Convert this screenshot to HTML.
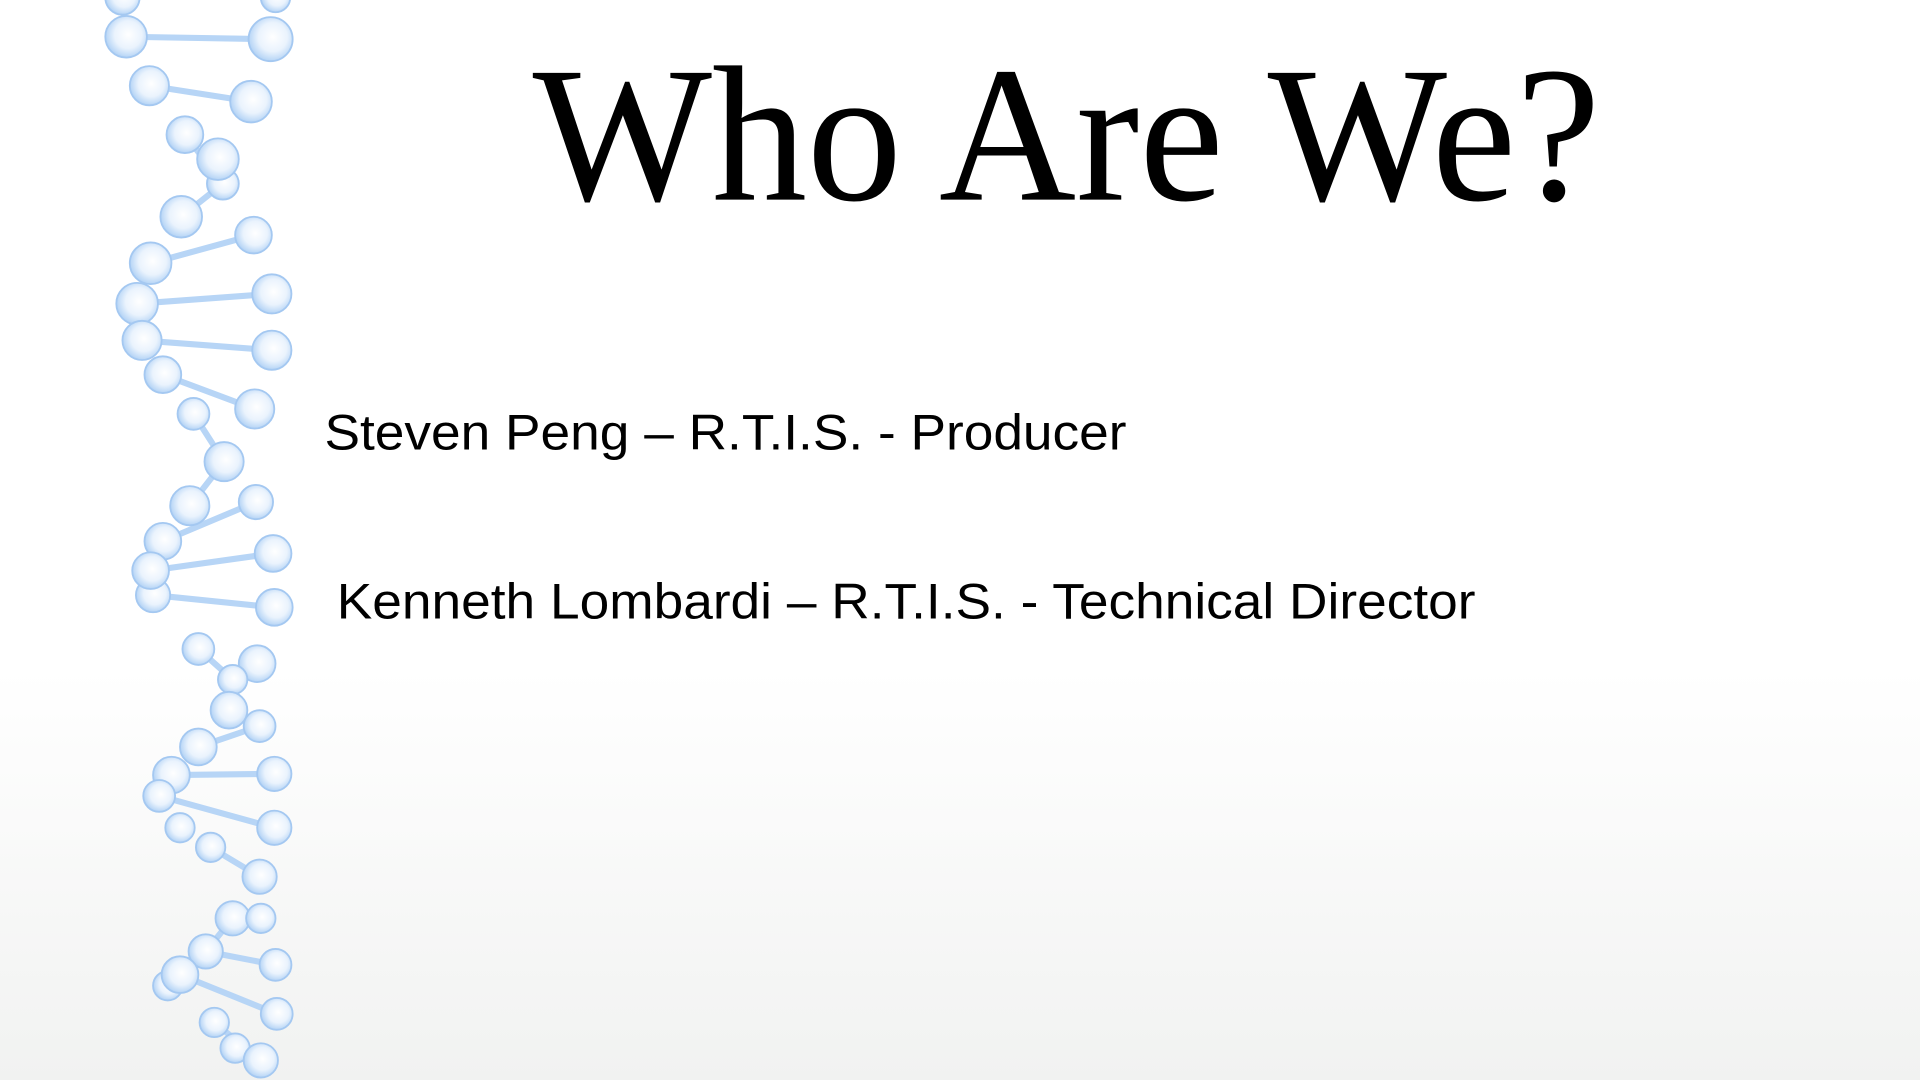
<!DOCTYPE html>
<html><head><meta charset="utf-8"><style>
html,body{margin:0;padding:0;width:1920px;height:1080px;overflow:hidden;background:#fff}
svg{display:block}
</style></head><body>
<svg width="1920" height="1080" viewBox="0 0 1568 882" xmlns="http://www.w3.org/2000/svg">
<defs>
<linearGradient id="bg" x1="0" y1="0" x2="0" y2="1">
<stop offset="0" stop-color="#ffffff"/><stop offset="0.62" stop-color="#ffffff"/><stop offset="1" stop-color="#f1f2f1"/>
</linearGradient>
<radialGradient id="ball" cx="0.55" cy="0.45" r="0.6">
<stop offset="0" stop-color="#ffffff"/><stop offset="0.55" stop-color="#eaf3fd"/><stop offset="1" stop-color="#a9cdf4"/>
</radialGradient>
</defs>
<rect width="1568" height="882" fill="url(#bg)"/>
<g stroke="#b7d5f6" stroke-width="5" stroke-linecap="round">
<line x1="103" y1="30" x2="221" y2="32"/>
<line x1="122" y1="70" x2="205" y2="83"/>
<line x1="151" y1="110" x2="182" y2="150"/>
<line x1="148" y1="177" x2="182" y2="150"/>
<line x1="123" y1="215" x2="207" y2="192"/>
<line x1="112" y1="248" x2="222" y2="240"/>
<line x1="116" y1="278" x2="222" y2="286"/>
<line x1="133" y1="306" x2="208" y2="334"/>
<line x1="158" y1="338" x2="183" y2="377"/>
<line x1="155" y1="413" x2="183" y2="377"/>
<line x1="133" y1="442" x2="209" y2="410"/>
<line x1="123" y1="466" x2="223" y2="452"/>
<line x1="125" y1="486" x2="224" y2="496"/>
<line x1="162" y1="530" x2="190" y2="555"/>
<line x1="162" y1="610" x2="212" y2="593"/>
<line x1="140" y1="633" x2="224" y2="632"/>
<line x1="130" y1="650" x2="224" y2="676"/>
<line x1="172" y1="692" x2="212" y2="716"/>
<line x1="190" y1="750" x2="168" y2="777"/>
<line x1="168" y1="777" x2="225" y2="788"/>
<line x1="147" y1="796" x2="226" y2="828"/>
<line x1="175" y1="835" x2="213" y2="866"/>
</g>
<g fill="url(#ball)" stroke="#a4c8f1" stroke-width="1.5">
<circle cx="100" cy="-2" r="14"/><circle cx="225" cy="-2" r="12"/>
<circle cx="103" cy="30" r="17"/><circle cx="221" cy="32" r="18"/>
<circle cx="122" cy="70" r="16"/><circle cx="205" cy="83" r="17"/>
<circle cx="151" cy="110" r="15"/><circle cx="182" cy="150" r="13"/><circle cx="178" cy="130" r="17"/>
<circle cx="148" cy="177" r="17"/><circle cx="207" cy="192" r="15"/>
<circle cx="123" cy="215" r="17"/>
<circle cx="112" cy="248" r="17"/><circle cx="222" cy="240" r="16"/>
<circle cx="116" cy="278" r="16"/><circle cx="222" cy="286" r="16"/>
<circle cx="133" cy="306" r="15"/><circle cx="208" cy="334" r="16"/>
<circle cx="158" cy="338" r="13"/><circle cx="183" cy="377" r="16"/>
<circle cx="155" cy="413" r="16"/><circle cx="209" cy="410" r="14"/>
<circle cx="133" cy="442" r="15"/><circle cx="223" cy="452" r="15"/>
<circle cx="125" cy="486" r="14"/>
<circle cx="123" cy="466" r="15"/><circle cx="224" cy="496" r="15"/>
<circle cx="162" cy="530" r="13"/><circle cx="210" cy="542" r="15"/>
<circle cx="190" cy="555" r="12"/><circle cx="187" cy="580" r="15"/>
<circle cx="162" cy="610" r="15"/><circle cx="212" cy="593" r="13"/>
<circle cx="140" cy="633" r="15"/><circle cx="224" cy="632" r="14"/>
<circle cx="147" cy="676" r="12"/>
<circle cx="130" cy="650" r="13"/><circle cx="224" cy="676" r="14"/>
<circle cx="172" cy="692" r="12"/><circle cx="212" cy="716" r="14"/>
<circle cx="190" cy="750" r="14"/><circle cx="213" cy="750" r="12"/>
<circle cx="168" cy="777" r="14"/><circle cx="225" cy="788" r="13"/>
<circle cx="137" cy="805" r="12"/>
<circle cx="147" cy="796" r="15"/><circle cx="226" cy="828" r="13"/>
<circle cx="175" cy="835" r="12"/><circle cx="192" cy="856" r="12"/>
<circle cx="213" cy="866" r="14"/>
</g>
<text x="435" y="163" font-family="Liberation Serif, serif" font-size="158" textLength="872" lengthAdjust="spacingAndGlyphs" fill="#000">Who Are We?</text>
<text x="265" y="367" font-family="Liberation Sans, sans-serif" font-size="41" textLength="655" lengthAdjust="spacingAndGlyphs" fill="#000">Steven Peng – R.T.I.S. - Producer</text>
<text x="275" y="505" font-family="Liberation Sans, sans-serif" font-size="41" textLength="930" lengthAdjust="spacingAndGlyphs" fill="#000">Kenneth Lombardi – R.T.I.S. - Technical Director</text>
</svg>
</body></html>
